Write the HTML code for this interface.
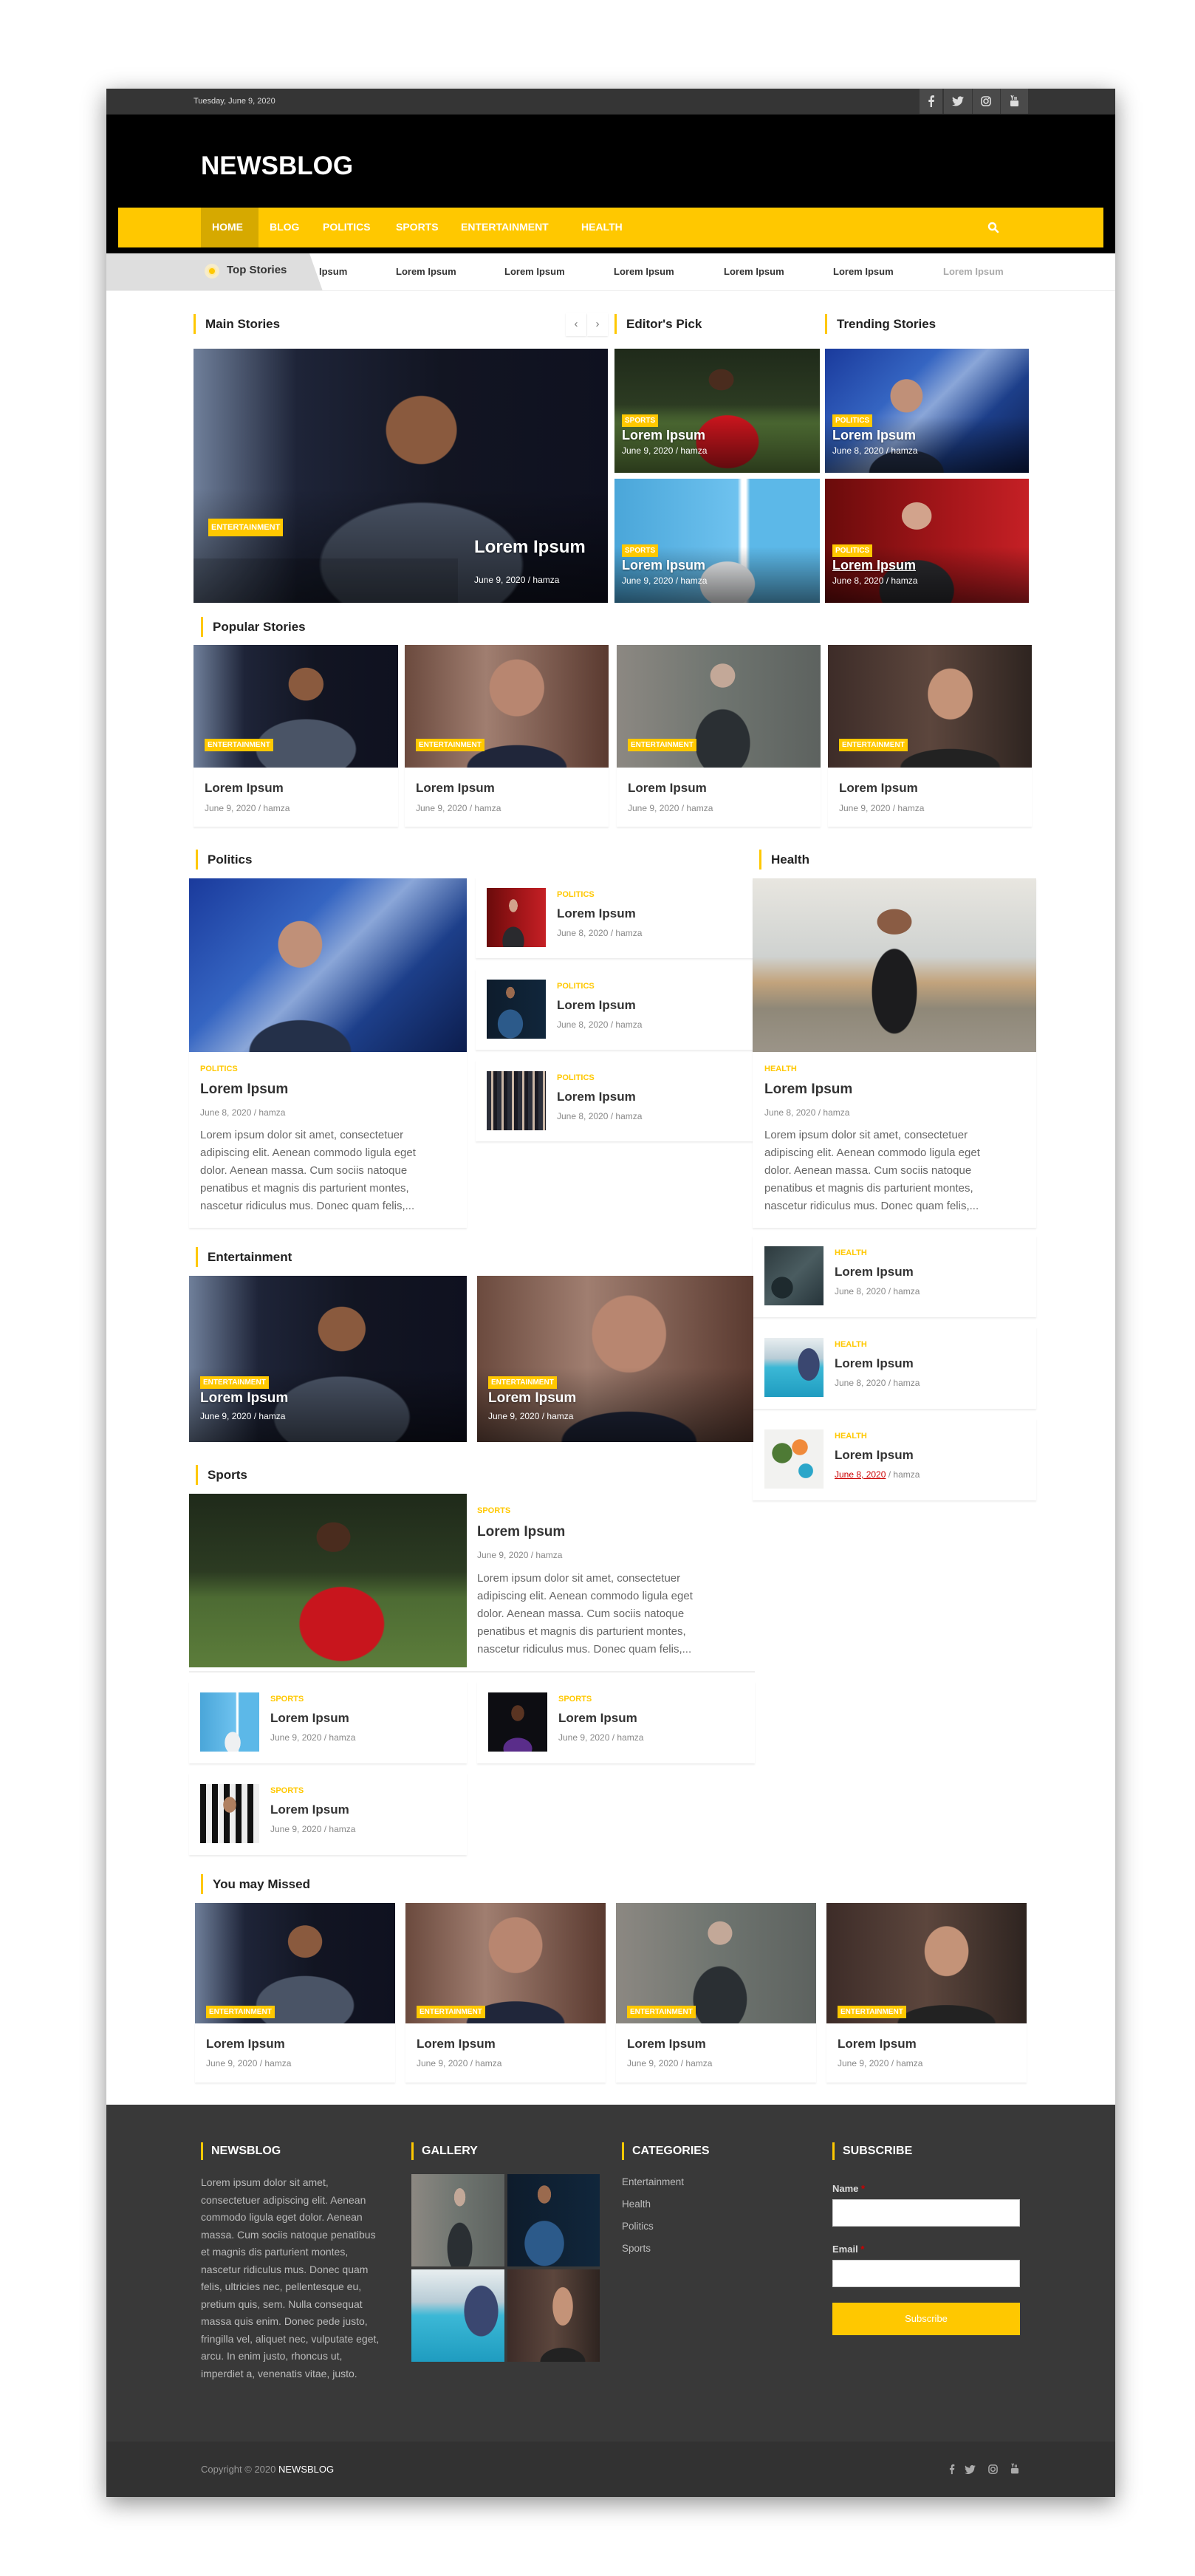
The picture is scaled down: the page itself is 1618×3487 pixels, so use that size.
<!DOCTYPE html>
<html><head><meta charset="utf-8">
<style>
*{box-sizing:border-box;margin:0;padding:0}
body{width:1618px;height:3487px;background:#fff;position:relative;font-family:"Liberation Sans",sans-serif;overflow:hidden}
.a{position:absolute}
.frame{left:144px;top:120px;width:1366px;height:3260px;background:#fff;box-shadow:0 8px 30px rgba(0,0,0,.45)}
.h{position:absolute;font-weight:bold;font-size:17px;color:#222;padding-left:13px;line-height:27px;border-left:3px solid #ffc800;white-space:nowrap}
.img{position:absolute;overflow:hidden}
.lab{position:absolute;background:#ffc800;color:#fff;font-weight:bold;font-size:10px;padding:0 4px;line-height:17px;white-space:nowrap}
.ot{position:absolute;color:#fff;font-weight:bold;font-size:18px;white-space:nowrap;text-shadow:0 1px 2px rgba(0,0,0,.5)}
.om{position:absolute;color:#fff;font-size:12px;white-space:nowrap}
.card{position:absolute;background:#fff;box-shadow:0 2px 2px rgba(0,0,0,.07)}
.t{position:absolute;font-weight:bold;font-size:17px;color:#333;white-space:nowrap}
.m{position:absolute;font-size:12px;color:#888;white-space:nowrap}
.c{position:absolute;font-weight:bold;font-size:11px;color:#ffc800;white-space:nowrap}
.p{position:absolute;font-size:15px;color:#666;line-height:24px}
.fh{position:absolute;color:#fff;font-weight:bold;font-size:16px;border-left:3px solid #ffc800;padding-left:11px;line-height:24px}
.will{background:radial-gradient(ellipse 14% 22% at 55% 32%,#8a5a3e 60%,transparent 62%),radial-gradient(ellipse 40% 40% at 55% 85%,#4a5466 60%,transparent 62%),linear-gradient(90deg,#6f7f9a 0%,#1e2438 25%,#121522 60%,#0f1120)}
.stat{background:radial-gradient(ellipse 22% 38% at 55% 35%,#b88670 60%,transparent 62%),radial-gradient(ellipse 40% 30% at 55% 100%,#20263a 60%,transparent 62%),linear-gradient(90deg,#6b4a3e,#a07e70 40%,#5a3a30)}
.cill{background:radial-gradient(ellipse 10% 16% at 52% 25%,#c3a898 60%,transparent 62%),radial-gradient(ellipse 22% 45% at 52% 80%,#2a2f33 60%,transparent 62%),linear-gradient(90deg,#8c8882,#6f7570 50%,#5d625f)}
.tom{background:radial-gradient(ellipse 18% 34% at 60% 40%,#c49378 60%,transparent 62%),radial-gradient(ellipse 40% 25% at 60% 100%,#222 60%,transparent 62%),linear-gradient(90deg,#3d2c28,#5c463d 50%,#2e2420)}
.tig{background:radial-gradient(ellipse 10% 14% at 52% 25%,#4a2c1e 60%,transparent 62%),radial-gradient(ellipse 25% 35% at 55% 75%,#c8151d 60%,transparent 62%),linear-gradient(180deg,#1f2a1a 0%,#2c3b22 45%,#4d6b33 60%,#5c7d3b)}
.tru{background:radial-gradient(ellipse 13% 22% at 40% 38%,#c09078 60%,transparent 62%),radial-gradient(ellipse 30% 30% at 40% 100%,#243049 60%,transparent 62%),linear-gradient(135deg,#1a3a9c,#3565c2 35%,#8aa6d8 50%,#1d3f8a 70%,#0c1d4d)}
.fed{background:radial-gradient(ellipse 22% 30% at 55% 85%,#eef0f2 60%,transparent 62%),linear-gradient(90deg,#4aa6d9,#6ec2ef 60%,#fff 62%,#fff 64%,#5cb8e8 66%)}
.erd{background:radial-gradient(ellipse 12% 18% at 45% 30%,#d2a38c 60%,transparent 62%),radial-gradient(ellipse 30% 40% at 45% 90%,#2a2a2e 60%,transparent 62%),linear-gradient(90deg,#6a0b0b,#a5161a 60%,#c52025)}
.khan{background:radial-gradient(ellipse 12% 16% at 40% 22%,#9a6a4e 60%,transparent 62%),radial-gradient(ellipse 35% 40% at 40% 75%,#2c5a8a 60%,transparent 62%),linear-gradient(90deg,#0e1c2c,#10263b)}
.crowd{background:repeating-linear-gradient(90deg,#2c2f3a 0 6px,#c9b5a4 6px 9px,#1a1a22 9px 14px),linear-gradient(#888,#333)}
.gym{background:radial-gradient(ellipse 10% 12% at 50% 25%,#8a5c44 60%,transparent 62%),radial-gradient(ellipse 13% 40% at 50% 65%,#1c1c1e 60%,transparent 62%),linear-gradient(180deg,#e8e6e0 0%,#cfd2d0 45%,#c2a37c 60%,#8f8878 75%,#9b9488)}
.lift{background:radial-gradient(ellipse 30% 30% at 30% 70%,#1e2a2e 60%,transparent 62%),linear-gradient(135deg,#2d3a3e,#4a5c60 50%,#26343a)}
.run{background:radial-gradient(ellipse 30% 45% at 75% 45%,#3a4770 60%,transparent 62%),linear-gradient(180deg,#e8eef0 0%,#b8ccd6 35%,#3bb8d6 50%,#1f9cc0)}
.food{background:radial-gradient(circle at 30% 40%,#4e7a35 18%,transparent 19%),radial-gradient(circle at 60% 30%,#f08a3a 14%,transparent 15%),radial-gradient(circle at 70% 70%,#2ba6c9 12%,transparent 13%),#f2f2f0}
.kobe{background:radial-gradient(ellipse 18% 22% at 50% 35%,#5a3422 60%,transparent 62%),radial-gradient(ellipse 40% 30% at 50% 95%,#5a2d8a 60%,transparent 62%),#0d0d12}
.cr7{background:radial-gradient(ellipse 18% 22% at 50% 35%,#b08060 60%,transparent 62%),repeating-linear-gradient(90deg,#111 0 8px,#eee 8px 16px)}
.ov{position:absolute;left:0;right:0;bottom:0;height:45%;background:linear-gradient(transparent,rgba(0,0,0,.55))}
</style></head><body>
<div class="a frame"></div>
<div class="a" style="left:144px;top:120px;width:1366px;height:35px;background:#353535"></div>
<div class="a" style="left:262px;top:131px;font-size:11px;color:#ddd">Tuesday, June 9, 2020</div>
<div class="a" style="left:1245px;top:120px;width:31px;height:34px;background:#4a4a4a"></div>
<div class="a" style="left:1278px;top:120px;width:38px;height:34px;background:#4a4a4a"></div>
<div class="a" style="left:1317px;top:120px;width:37px;height:34px;background:#4a4a4a"></div>
<div class="a" style="left:1355px;top:120px;width:37px;height:34px;background:#4a4a4a"></div>
<svg class="a" style="left:1255px;top:129px" width="12" height="16" viewBox="0 0 12 16"><path d="M7 16V9h2.5l.4-3H7V4.3c0-.8.3-1.3 1.4-1.3H10V.3C9.6.2 8.8.1 7.9.1 5.9.1 4.6 1.3 4.6 3.5V6H2.3v3h2.3v7z" fill="#ddd"/></svg>
<svg class="a" style="left:1289px;top:130px" width="16" height="14" viewBox="0 0 16 13"><path d="M16 1.5c-.6.3-1.2.4-1.9.5.7-.4 1.2-1 1.4-1.8-.6.4-1.3.6-2.1.8A3.3 3.3 0 0 0 7.8 4 9.3 9.3 0 0 1 1.1.6a3.3 3.3 0 0 0 1 4.4c-.5 0-1-.2-1.5-.4 0 1.6 1.1 2.9 2.6 3.2-.5.1-1 .2-1.5.1.4 1.300 1.6 2.3 3.1 2.3A6.6 6.6 0 0 1 0 11.5 9.3 9.3 0 0 0 14.3 3.7V3.3c.7-.5 1.2-1 1.7-1.8z" fill="#ddd"/></svg>
<svg class="a" style="left:1328px;top:130px" width="14" height="14" viewBox="0 0 14 14"><rect x="1" y="1" width="12" height="12" rx="3.5" fill="none" stroke="#ddd" stroke-width="1.6"/><circle cx="7" cy="7" r="3" fill="none" stroke="#ddd" stroke-width="1.6"/><circle cx="10.6" cy="3.4" r=".9" fill="#ddd"/></svg>
<svg class="a" style="left:1367px;top:128px" width="13" height="17" viewBox="0 0 13 17"><rect x="1" y="8" width="11" height="8" rx="1.5" fill="#ddd"/><path d="M2 1l1.5 3.5V7M5 1L3.5 4.5M7 3v4M9 3v4" stroke="#ddd" stroke-width="1.3" fill="none"/></svg>
<div class="a" style="left:144px;top:155px;width:1366px;height:188px;background:#000"></div>
<div class="a" style="left:272px;top:205px;font-size:35px;font-weight:bold;color:#fff">NEWSBLOG</div>
<div class="a" style="left:160px;top:281px;width:1334px;height:54px;background:#ffc800"></div>
<div class="a" style="left:272px;top:281px;width:78px;height:54px;background:#d6a900"></div>
<div class="a" style="top:299px;left:287px;color:#fff;font-weight:bold;font-size:14px">HOME</div>
<div class="a" style="top:299px;left:365px;color:#fff;font-weight:bold;font-size:14px">BLOG</div>
<div class="a" style="top:299px;left:437px;color:#fff;font-weight:bold;font-size:14px">POLITICS</div>
<div class="a" style="top:299px;left:536px;color:#fff;font-weight:bold;font-size:14px">SPORTS</div>
<div class="a" style="top:299px;left:624px;color:#fff;font-weight:bold;font-size:14px">ENTERTAINMENT</div>
<div class="a" style="top:299px;left:787px;color:#fff;font-weight:bold;font-size:14px">HEALTH</div>
<svg class="a" style="left:1337px;top:300px" width="16" height="16" viewBox="0 0 16 16"><circle cx="6.5" cy="6.5" r="4.5" fill="none" stroke="#fff" stroke-width="2.4"/><path d="M10 10l4 4" stroke="#fff" stroke-width="2.6" stroke-linecap="round"/></svg>
<svg class="a" style="left:144px;top:343px" width="300" height="51"><polygon points="0,0 275,0 293,51 0,51" fill="#dedede"/></svg>
<div class="a" style="left:144px;top:393px;width:1366px;height:1px;background:#eee"></div>
<div class="a" style="left:277px;top:357px;width:20px;height:20px;border-radius:50%;background:#f6eccc"></div>
<div class="a" style="left:281px;top:361px;width:12px;height:12px;border-radius:50%;background:#ffc800;border:2px solid #fde9a6"></div>
<div class="a" style="left:307px;top:357px;font-weight:bold;font-size:15px;color:#333">Top Stories</div>
<div class="a" style="left:432px;top:360px;font-weight:bold;font-size:13px;color:#333">Ipsum</div>
<div class="a" style="left:536px;top:360px;font-weight:bold;font-size:13px;color:#333">Lorem Ipsum</div>
<div class="a" style="left:683px;top:360px;font-weight:bold;font-size:13px;color:#333">Lorem Ipsum</div>
<div class="a" style="left:831px;top:360px;font-weight:bold;font-size:13px;color:#333">Lorem Ipsum</div>
<div class="a" style="left:980px;top:360px;font-weight:bold;font-size:13px;color:#333">Lorem Ipsum</div>
<div class="a" style="left:1128px;top:360px;font-weight:bold;font-size:13px;color:#333">Lorem Ipsum</div>
<div class="a" style="left:1277px;top:360px;font-weight:bold;font-size:13px;color:#aaa">Lorem Ipsum</div>

<div class="h" style="left:262px;top:425px">Main Stories</div>
<div class="a" style="left:766px;top:424px;width:28px;height:31px;box-shadow:0 1px 2px rgba(0,0,0,.1);color:#777;text-align:center;line-height:30px;font-size:15px">‹</div>
<div class="a" style="left:795px;top:424px;width:28px;height:31px;box-shadow:0 1px 2px rgba(0,0,0,.1);color:#777;text-align:center;line-height:30px;font-size:15px">›</div>
<div class="h" style="left:832px;top:425px">Editor's Pick</div>
<div class="h" style="left:1117px;top:425px">Trending Stories</div>
<div class="img will" style="left:262px;top:472px;width:561px;height:344px"><div class="ov"></div></div>
<div class="a" style="left:262px;top:756px;width:358px;height:60px;background:rgba(0,0,0,.15)"></div>
<div class="lab" style="left:282px;top:702px;font-size:11px;line-height:24px">ENTERTAINMENT</div>
<div class="ot" style="left:642px;top:727px;font-size:24px">Lorem Ipsum</div>
<div class="om" style="left:642px;top:778px">June 9, 2020 / hamza</div>

<div class="img tig" style="left:832px;top:472px;width:278px;height:168px"><div class="ov"></div></div>
<div class="lab" style="left:842px;top:561px">SPORTS</div><div class="ot" style="left:842px;top:579px">Lorem Ipsum</div><div class="om" style="left:842px;top:603px">June 9, 2020 / hamza</div>
<div class="img tru" style="left:1117px;top:472px;width:276px;height:168px"><div class="ov"></div></div>
<div class="lab" style="left:1127px;top:561px">POLITICS</div><div class="ot" style="left:1127px;top:579px">Lorem Ipsum</div><div class="om" style="left:1127px;top:603px">June 8, 2020 / hamza</div>
<div class="img fed" style="left:832px;top:648px;width:278px;height:168px"><div class="ov"></div></div>
<div class="lab" style="left:842px;top:737px">SPORTS</div><div class="ot" style="left:842px;top:755px">Lorem Ipsum</div><div class="om" style="left:842px;top:779px">June 9, 2020 / hamza</div>
<div class="img erd" style="left:1117px;top:648px;width:276px;height:168px"><div class="ov"></div></div>
<div class="lab" style="left:1127px;top:737px">POLITICS</div><div class="ot" style="left:1127px;top:755px;text-decoration:underline">Lorem Ipsum</div><div class="om" style="left:1127px;top:779px">June 8, 2020 / hamza</div>

<div class="h" style="left:272px;top:835px">Popular Stories</div>
<div class="card" style="left:262px;top:873px;width:277px;height:246px"></div>
<div class="img will" style="left:262px;top:873px;width:277px;height:166px"></div>
<div class="lab" style="left:277px;top:1000px">ENTERTAINMENT</div>
<div class="t" style="left:277px;top:1057px">Lorem Ipsum</div><div class="m" style="left:277px;top:1087px">June 9, 2020 / hamza</div>
<div class="card" style="left:548px;top:873px;width:276px;height:246px"></div>
<div class="img stat" style="left:548px;top:873px;width:276px;height:166px"></div>
<div class="lab" style="left:563px;top:1000px">ENTERTAINMENT</div>
<div class="t" style="left:563px;top:1057px">Lorem Ipsum</div><div class="m" style="left:563px;top:1087px">June 9, 2020 / hamza</div>
<div class="card" style="left:835px;top:873px;width:276px;height:246px"></div>
<div class="img cill" style="left:835px;top:873px;width:276px;height:166px"></div>
<div class="lab" style="left:850px;top:1000px">ENTERTAINMENT</div>
<div class="t" style="left:850px;top:1057px">Lorem Ipsum</div><div class="m" style="left:850px;top:1087px">June 9, 2020 / hamza</div>
<div class="card" style="left:1121px;top:873px;width:276px;height:246px"></div>
<div class="img tom" style="left:1121px;top:873px;width:276px;height:166px"></div>
<div class="lab" style="left:1136px;top:1000px">ENTERTAINMENT</div>
<div class="t" style="left:1136px;top:1057px">Lorem Ipsum</div><div class="m" style="left:1136px;top:1087px">June 9, 2020 / hamza</div>

<div class="h" style="left:265px;top:1150px">Politics</div>
<div class="h" style="left:1028px;top:1150px">Health</div>
<div class="card" style="left:256px;top:1189px;width:376px;height:473px"></div>
<div class="img tru" style="left:256px;top:1189px;width:376px;height:235px"></div>
<div class="c" style="left:271px;top:1441px">POLITICS</div>
<div class="t" style="left:271px;top:1464px;font-size:19px">Lorem Ipsum</div>
<div class="m" style="left:271px;top:1499px">June 8, 2020 / hamza</div>
<div class="p" style="left:271px;top:1525px;width:320px">Lorem ipsum dolor sit amet, consectetuer adipiscing elit. Aenean commodo ligula eget dolor. Aenean massa. Cum sociis natoque penatibus et magnis dis parturient montes, nascetur ridiculus mus. Donec quam felis,...</div>

<div class="card" style="left:644px;top:1187px;width:376px;height:110px"></div>
<div class="img erd" style="left:659px;top:1202px;width:80px;height:80px"></div>
<div class="c" style="left:754px;top:1205px">POLITICS</div><div class="t" style="left:754px;top:1227px">Lorem Ipsum</div><div class="m" style="left:754px;top:1256px">June 8, 2020 / hamza</div>
<div class="card" style="left:644px;top:1311px;width:376px;height:110px"></div>
<div class="img khan" style="left:659px;top:1326px;width:80px;height:80px"></div>
<div class="c" style="left:754px;top:1329px">POLITICS</div><div class="t" style="left:754px;top:1351px">Lorem Ipsum</div><div class="m" style="left:754px;top:1380px">June 8, 2020 / hamza</div>
<div class="card" style="left:644px;top:1435px;width:376px;height:110px"></div>
<div class="img crowd" style="left:659px;top:1450px;width:80px;height:80px"></div>
<div class="c" style="left:754px;top:1453px">POLITICS</div><div class="t" style="left:754px;top:1475px">Lorem Ipsum</div><div class="m" style="left:754px;top:1504px">June 8, 2020 / hamza</div>

<div class="card" style="left:1019px;top:1189px;width:384px;height:473px"></div>
<div class="img gym" style="left:1019px;top:1189px;width:384px;height:235px"></div>
<div class="c" style="left:1035px;top:1441px">HEALTH</div>
<div class="t" style="left:1035px;top:1464px;font-size:19px">Lorem Ipsum</div>
<div class="m" style="left:1035px;top:1499px">June 8, 2020 / hamza</div>
<div class="p" style="left:1035px;top:1525px;width:330px">Lorem ipsum dolor sit amet, consectetuer adipiscing elit. Aenean commodo ligula eget dolor. Aenean massa. Cum sociis natoque penatibus et magnis dis parturient montes, nascetur ridiculus mus. Donec quam felis,...</div>

<div class="card" style="left:1019px;top:1672px;width:384px;height:111px"></div>
<div class="img lift" style="left:1035px;top:1687px;width:80px;height:80px"></div>
<div class="c" style="left:1130px;top:1690px">HEALTH</div><div class="t" style="left:1130px;top:1712px">Lorem Ipsum</div><div class="m" style="left:1130px;top:1741px">June 8, 2020 / hamza</div>
<div class="card" style="left:1019px;top:1796px;width:384px;height:111px"></div>
<div class="img run" style="left:1035px;top:1811px;width:80px;height:80px"></div>
<div class="c" style="left:1130px;top:1814px">HEALTH</div><div class="t" style="left:1130px;top:1836px">Lorem Ipsum</div><div class="m" style="left:1130px;top:1865px">June 8, 2020 / hamza</div>
<div class="card" style="left:1019px;top:1920px;width:384px;height:111px"></div>
<div class="img food" style="left:1035px;top:1935px;width:80px;height:80px"></div>
<div class="c" style="left:1130px;top:1938px">HEALTH</div><div class="t" style="left:1130px;top:1960px">Lorem Ipsum</div><div class="m" style="left:1130px;top:1989px"><span style="color:#c00;text-decoration:underline">June 8, 2020</span> / hamza</div>

<div class="h" style="left:265px;top:1688px">Entertainment</div>
<div class="img will" style="left:256px;top:1727px;width:376px;height:225px"><div class="ov"></div></div>
<div class="lab" style="left:271px;top:1863px">ENTERTAINMENT</div><div class="ot" style="left:271px;top:1882px;font-size:19px">Lorem Ipsum</div><div class="om" style="left:271px;top:1910px">June 9, 2020 / hamza</div>
<div class="img stat" style="left:646px;top:1727px;width:374px;height:225px"><div class="ov"></div></div>
<div class="lab" style="left:661px;top:1863px">ENTERTAINMENT</div><div class="ot" style="left:661px;top:1882px;font-size:19px">Lorem Ipsum</div><div class="om" style="left:661px;top:1910px">June 9, 2020 / hamza</div>

<div class="h" style="left:265px;top:1983px">Sports</div>
<div class="img tig" style="left:256px;top:2022px;width:376px;height:235px"></div>
<div class="c" style="left:646px;top:2039px">SPORTS</div>
<div class="t" style="left:646px;top:2063px;font-size:19px">Lorem Ipsum</div>
<div class="m" style="left:646px;top:2098px">June 9, 2020 / hamza</div>
<div class="p" style="left:646px;top:2125px;width:330px">Lorem ipsum dolor sit amet, consectetuer adipiscing elit. Aenean commodo ligula eget dolor. Aenean massa. Cum sociis natoque penatibus et magnis dis parturient montes, nascetur ridiculus mus. Donec quam felis,...</div>
<div class="a" style="left:256px;top:2262px;width:766px;height:2px;background:#eee"></div>

<div class="card" style="left:256px;top:2276px;width:376px;height:111px"></div>
<div class="img fed" style="left:271px;top:2291px;width:80px;height:80px"></div>
<div class="c" style="left:366px;top:2294px">SPORTS</div><div class="t" style="left:366px;top:2316px">Lorem Ipsum</div><div class="m" style="left:366px;top:2345px">June 9, 2020 / hamza</div>
<div class="card" style="left:646px;top:2276px;width:376px;height:111px"></div>
<div class="img kobe" style="left:661px;top:2291px;width:80px;height:80px"></div>
<div class="c" style="left:756px;top:2294px">SPORTS</div><div class="t" style="left:756px;top:2316px">Lorem Ipsum</div><div class="m" style="left:756px;top:2345px">June 9, 2020 / hamza</div>
<div class="card" style="left:256px;top:2400px;width:376px;height:111px"></div>
<div class="img cr7" style="left:271px;top:2415px;width:80px;height:80px"></div>
<div class="c" style="left:366px;top:2418px">SPORTS</div><div class="t" style="left:366px;top:2440px">Lorem Ipsum</div><div class="m" style="left:366px;top:2469px">June 9, 2020 / hamza</div>

<div class="h" style="left:272px;top:2537px">You may Missed</div>
<div class="card" style="left:264px;top:2576px;width:271px;height:243px"></div>
<div class="img will" style="left:264px;top:2576px;width:271px;height:163px"></div>
<div class="lab" style="left:279px;top:2715px">ENTERTAINMENT</div>
<div class="t" style="left:279px;top:2757px">Lorem Ipsum</div><div class="m" style="left:279px;top:2786px">June 9, 2020 / hamza</div>
<div class="card" style="left:549px;top:2576px;width:271px;height:243px"></div>
<div class="img stat" style="left:549px;top:2576px;width:271px;height:163px"></div>
<div class="lab" style="left:564px;top:2715px">ENTERTAINMENT</div>
<div class="t" style="left:564px;top:2757px">Lorem Ipsum</div><div class="m" style="left:564px;top:2786px">June 9, 2020 / hamza</div>
<div class="card" style="left:834px;top:2576px;width:271px;height:243px"></div>
<div class="img cill" style="left:834px;top:2576px;width:271px;height:163px"></div>
<div class="lab" style="left:849px;top:2715px">ENTERTAINMENT</div>
<div class="t" style="left:849px;top:2757px">Lorem Ipsum</div><div class="m" style="left:849px;top:2786px">June 9, 2020 / hamza</div>
<div class="card" style="left:1119px;top:2576px;width:271px;height:243px"></div>
<div class="img tom" style="left:1119px;top:2576px;width:271px;height:163px"></div>
<div class="lab" style="left:1134px;top:2715px">ENTERTAINMENT</div>
<div class="t" style="left:1134px;top:2757px">Lorem Ipsum</div><div class="m" style="left:1134px;top:2786px">June 9, 2020 / hamza</div>

<div class="a" style="left:144px;top:2849px;width:1366px;height:456px;background:#393939"></div>
<div class="a" style="left:144px;top:3305px;width:1366px;height:75px;background:#323232"></div>
<div class="fh" style="left:272px;top:2900px">NEWSBLOG</div>
<div class="fh" style="left:557px;top:2900px">GALLERY</div>
<div class="fh" style="left:842px;top:2900px">CATEGORIES</div>
<div class="fh" style="left:1127px;top:2900px">SUBSCRIBE</div>
<div class="p" style="left:272px;top:2943px;width:245px;color:#bbb;font-size:14px;line-height:23.5px">Lorem ipsum dolor sit amet, consectetuer adipiscing elit. Aenean commodo ligula eget dolor. Aenean massa. Cum sociis natoque penatibus et magnis dis parturient montes, nascetur ridiculus mus. Donec quam felis, ultricies nec, pellentesque eu, pretium quis, sem. Nulla consequat massa quis enim. Donec pede justo, fringilla vel, aliquet nec, vulputate eget, arcu. In enim justo, rhoncus ut, imperdiet a, venenatis vitae, justo.</div>
<div class="img cill" style="left:557px;top:2943px;width:126px;height:125px"></div>
<div class="img khan" style="left:687px;top:2943px;width:125px;height:125px"></div>
<div class="img run" style="left:557px;top:3072px;width:126px;height:125px"></div>
<div class="img tom" style="left:687px;top:3072px;width:125px;height:125px"></div>
<div class="a" style="left:842px;top:2946px;font-size:13.5px;color:#bbb">Entertainment</div>
<div class="a" style="left:842px;top:2976px;font-size:13.5px;color:#bbb">Health</div>
<div class="a" style="left:842px;top:3006px;font-size:13.5px;color:#bbb">Politics</div>
<div class="a" style="left:842px;top:3036px;font-size:13.5px;color:#bbb">Sports</div>
<div class="a" style="left:1127px;top:2955px;font-size:13px;font-weight:bold;color:#ddd">Name <span style="color:#c00">*</span></div>
<div class="a" style="left:1127px;top:2977px;width:254px;height:37px;background:#fff;border:1px solid #ccc"></div>
<div class="a" style="left:1127px;top:3037px;font-size:13px;font-weight:bold;color:#ddd">Email <span style="color:#c00">*</span></div>
<div class="a" style="left:1127px;top:3059px;width:254px;height:37px;background:#fff;border:1px solid #ccc"></div>
<div class="a" style="left:1127px;top:3117px;width:254px;height:44px;background:#ffc800;color:#fff;font-size:13px;text-align:center;line-height:44px">Subscribe</div>
<div class="a" style="left:272px;top:3335px;font-size:13px;color:#999">Copyright © 2020 <span style="color:#fff">NEWSBLOG</span></div>
<svg class="a" style="left:1284px;top:3335px" width="10" height="15" viewBox="0 0 12 16"><path d="M7 16V9h2.5l.4-3H7V4.3c0-.8.3-1.3 1.4-1.3H10V.3C9.6.2 8.8.1 7.9.1 5.9.1 4.6 1.3 4.6 3.5V6H2.3v3h2.3v7z" fill="#aaa"/></svg>
<svg class="a" style="left:1306px;top:3337px" width="15" height="12" viewBox="0 0 16 13"><path d="M16 1.5c-.6.3-1.2.4-1.9.5.7-.4 1.2-1 1.4-1.8-.6.4-1.3.6-2.1.8A3.3 3.3 0 0 0 7.8 4 9.3 9.3 0 0 1 1.1.6a3.3 3.3 0 0 0 1 4.4c-.5 0-1-.2-1.5-.4 0 1.6 1.1 2.9 2.6 3.2-.5.1-1 .2-1.5.1.4 1.3 1.6 2.3 3.1 2.3A6.6 6.6 0 0 1 0 11.5 9.3 9.3 0 0 0 14.3 3.7V3.3c.7-.5 1.2-1 1.7-1.8z" fill="#aaa"/></svg>
<svg class="a" style="left:1338px;top:3336px" width="13" height="13" viewBox="0 0 14 14"><rect x="1" y="1" width="12" height="12" rx="3.5" fill="none" stroke="#aaa" stroke-width="1.6"/><circle cx="7" cy="7" r="3" fill="none" stroke="#aaa" stroke-width="1.6"/></svg>
<svg class="a" style="left:1368px;top:3333px" width="12" height="17" viewBox="0 0 13 17"><rect x="1" y="8" width="11" height="8" rx="1.5" fill="#aaa"/><path d="M2 1l1.5 3.5V7M5 1L3.5 4.5M7 3v4M9 3v4" stroke="#aaa" stroke-width="1.3" fill="none"/></svg>
</body></html>
